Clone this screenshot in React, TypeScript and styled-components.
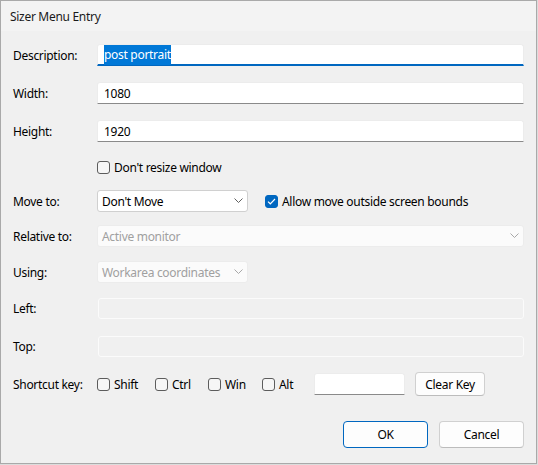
import React from "react";
import styled, { createGlobalStyle } from "styled-components";

const Global = createGlobalStyle`
  html, body { margin: 0; padding: 0; background: #dcdcdc; }
  body { font-family: "Segoe UI", "Noto Sans", "Open Sans", sans-serif; font-size: 12px; letter-spacing: -0.3px; color: #000; }
  * { box-sizing: border-box; }
`;

const Window = styled.div`
  width: 537px;
  height: 464px;
  border: 1px solid #a9a9a9;
  background: #f0f0f0;
  display: flex;
  flex-direction: column;
`;

const TitleBar = styled.div`
  height: 30px;
  background: #f3f3f3;
  display: flex;
  align-items: center;
  padding-left: 9px;
  font-size: 12px;
  color: #1a1a1a;
`;

const Body = styled.div`
  flex: 1;
  padding: 13px 12px 0 12px;
  display: flex;
  flex-direction: column;
`;

const Row = styled.div<{ $gap?: number; $h?: number }>`
  display: flex;
  align-items: center;
  height: ${(p) => p.$h ?? 22}px;
  margin-top: ${(p) => p.$gap ?? 0}px;
`;

const Label = styled.div`
  width: 84px;
  flex: none;
  white-space: nowrap;
`;

const TextBox = styled.div<{ $focused?: boolean; $w?: number }>`
  ${(p) => (p.$w ? `width: ${p.$w}px; flex: none;` : "flex: 1;")}
  height: 22px;
  background: #fff;
  border: 1px solid #ececec;
  border-bottom: ${(p) => (p.$focused ? "2px solid #0067c0" : "1px solid #8a8a8a")};
  border-radius: 3px 3px 0 0;
  display: flex;
  align-items: center;
  padding-left: 6px;
  white-space: nowrap;
`;

const DisabledBox = styled.div`
  flex: 1;
  height: 21px;
  margin-left: 1px;
  background: #f0f0f0;
  border: 1px solid #fbfbfb;
  border-radius: 3px;
`;

const Selected = styled.span`
  background: #0078d7;
  color: #fff;
  padding: 1px 0 2px;
`;

const Combo = styled.div<{ $disabled?: boolean; $w?: number }>`
  ${(p) => (p.$w ? `width: ${p.$w}px; flex: none;` : "flex: 1;")}
  height: 22px;
  background: ${(p) => (p.$disabled ? "#fbfbfb" : "#fff")};
  border: 1px solid ${(p) => (p.$disabled ? "#ececec" : "#d0d0d0")};
  border-radius: 3px;
  display: flex;
  align-items: center;
  justify-content: space-between;
  padding: 0 4px 0 4px;
  color: ${(p) => (p.$disabled ? "#a0a0a0" : "#000")};
  white-space: nowrap;
`;

const Chevron = ({ color }: { color: string }) => (
  <svg width="9" height="6" viewBox="0 0 9 6">
    <path d="M0.5 0.5 L4.5 4.5 L8.5 0.5" fill="none" stroke={color} strokeWidth="1" />
  </svg>
);

const CheckLabel = styled.label<{ $w?: number }>`
  display: flex;
  align-items: center;
  gap: 4px;
  ${(p) => (p.$w ? `width: ${p.$w}px; flex: none;` : "")}
  white-space: nowrap;
`;

const Box = styled.span<{ $checked?: boolean }>`
  width: 13px;
  height: 13px;
  flex: none;
  border-radius: 3px;
  border: 1px solid ${(p) => (p.$checked ? "#0067c0" : "#5c5c5c")};
  background: ${(p) => (p.$checked ? "#0067c0" : "#f6f6f6")};
  display: flex;
  align-items: center;
  justify-content: center;
`;

const Check = ({ checked }: { checked?: boolean }) => (
  <Box $checked={checked}>
    {checked && (
      <svg width="9" height="7" viewBox="0 0 9 7">
        <path d="M1 3.6 L3.3 5.8 L8 1" fill="none" stroke="#fff" strokeWidth="1.2" />
      </svg>
    )}
  </Box>
);

const Button = styled.div<{ $default?: boolean; $w: number; $h: number }>`
  width: ${(p) => p.$w}px;
  height: ${(p) => p.$h}px;
  flex: none;
  background: #fdfdfd;
  border: 1px solid ${(p) => (p.$default ? "#0067c0" : "#d0d0d0")};
  border-bottom-color: ${(p) => (p.$default ? "#0067c0" : "#bcbcbc")};
  border-radius: 4px;
  display: flex;
  align-items: center;
  justify-content: center;
`;

const Footer = styled.div`
  display: flex;
  justify-content: flex-end;
  gap: 11px;
  margin-top: 26px;
`;

const Spacer = styled.div<{ $w: number }>`
  width: ${(p) => p.$w}px;
  flex: none;
`;

export default function App() {
  return (
    <>
      <Global />
      <Window>
        <TitleBar>Sizer Menu Entry</TitleBar>
        <Body>
          <Row>
            <Label>Description:</Label>
            <TextBox $focused>
              <Selected>post portrait</Selected>
            </TextBox>
          </Row>
          <Row $gap={16}>
            <Label>Width:</Label>
            <TextBox>1080</TextBox>
          </Row>
          <Row $gap={16}>
            <Label>Height:</Label>
            <TextBox>1920</TextBox>
          </Row>
          <Row $gap={14}>
            <Label />
            <CheckLabel>
              <Check />
              Don't resize window
            </CheckLabel>
          </Row>
          <Row $gap={12}>
            <Label>Move to:</Label>
            <Combo $w={151}>
              Don't Move
              <Chevron color="#606060" />
            </Combo>
            <Spacer $w={17} />
            <CheckLabel>
              <Check checked />
              Allow move outside screen bounds
            </CheckLabel>
          </Row>
          <Row $gap={13}>
            <Label>Relative to:</Label>
            <Combo $disabled>
              Active monitor
              <Chevron color="#a8a8a8" />
            </Combo>
          </Row>
          <Row $gap={14}>
            <Label>Using:</Label>
            <Combo $disabled $w={151}>
              Workarea coordinates
              <Chevron color="#a8a8a8" />
            </Combo>
          </Row>
          <Row $gap={14}>
            <Label>Left:</Label>
            <DisabledBox />
          </Row>
          <Row $gap={16}>
            <Label>Top:</Label>
            <DisabledBox />
          </Row>
          <Row $gap={16}>
            <Label>Shortcut key:</Label>
            <CheckLabel $w={58}>
              <Check />
              Shift
            </CheckLabel>
            <CheckLabel $w={53}>
              <Check />
              Ctrl
            </CheckLabel>
            <CheckLabel $w={54}>
              <Check />
              Win
            </CheckLabel>
            <CheckLabel $w={52}>
              <Check />
              Alt
            </CheckLabel>
            <TextBox $w={91} />
            <Spacer $w={10} />
            <Button $w={70} $h={24}>Clear Key</Button>
          </Row>
          <Footer>
            <Button $default $w={85} $h={27}>OK</Button>
            <Button $w={85} $h={27}>Cancel</Button>
          </Footer>
        </Body>
      </Window>
    </>
  );
}
